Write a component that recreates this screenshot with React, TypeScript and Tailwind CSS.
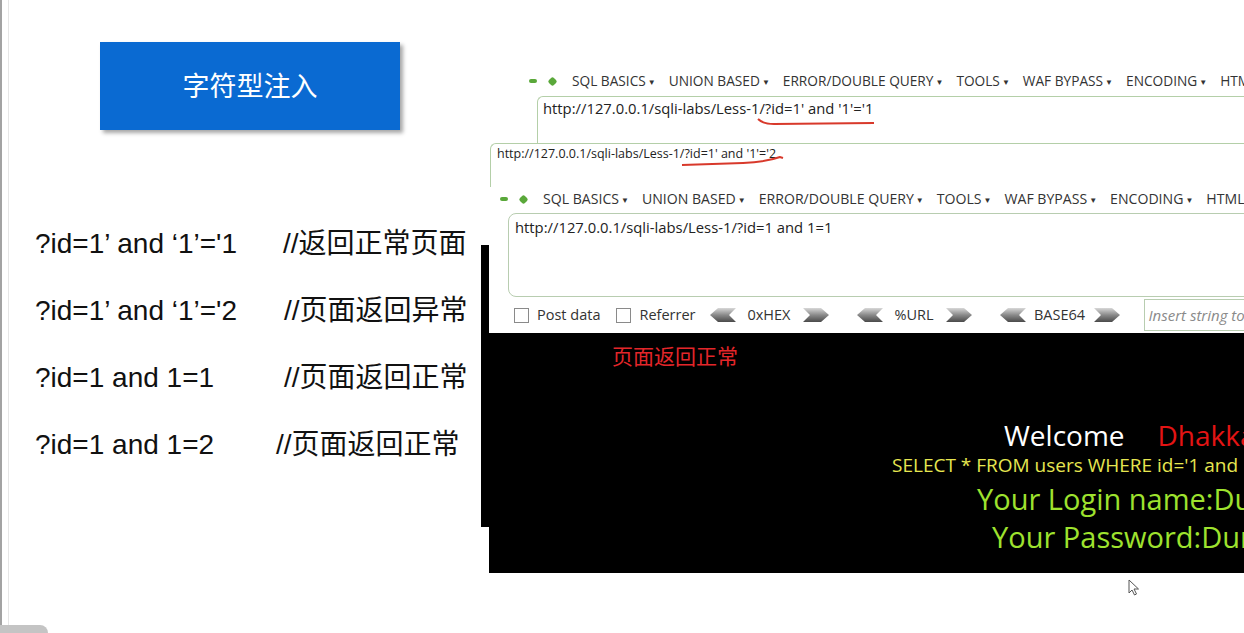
import React from "react";

const menuItems = [
  "SQL BASICS",
  "UNION BASED",
  "ERROR/DOUBLE QUERY",
  "TOOLS",
  "WAF BYPASS",
  "ENCODING",
  "HTML",
];

const rows = [
  { q: "?id=1’ and ‘1’='1", note: "//返回正常页面", w: "w-[248px]" },
  { q: "?id=1’ and ‘1’='2", note: "//页面返回异常", w: "w-[249px]" },
  { q: "?id=1 and 1=1", note: "//页面返回正常", w: "w-[249px]" },
  { q: "?id=1 and 1=2", note: "//页面返回正常", w: "w-[241px]" },
];

const HackMenu: React.FC<{ className?: string }> = ({ className = "" }) => (
  <div className={`flex items-center h-5 whitespace-nowrap text-[#333] ${className}`}>
    <span className="shrink-0 w-[8px] h-[4px] rounded-full bg-[#5aa83a]" />
    <span className="shrink-0 ml-[12px] w-[7px] h-[7px] rotate-45 rounded-[2px] bg-[#5aa83a]" />
    <div className="flex ml-[16px] gap-[13px]">
      {menuItems.map((m) => (
        <span key={m} className="flex items-center">
          {m}
          <span className="text-[8px] ml-[2px] mt-[1px]">▼</span>
        </span>
      ))}
    </div>
  </div>
);

const Arrow: React.FC<{ dir: "left" | "right" }> = ({ dir }) => (
  <svg width="26" height="14" viewBox="0 0 26 14" className="shrink-0">
    <defs>
      <linearGradient id={`g-${dir}`} x1="0" y1="0" x2="0" y2="1">
        <stop offset="0" stopColor="#d8d8d8" />
        <stop offset="0.5" stopColor="#8a8a8a" />
        <stop offset="1" stopColor="#4a4a4a" />
      </linearGradient>
    </defs>
    {dir === "left" ? (
      <polygon points="0,7 8,0 26,0 19,7 26,14 8,14" fill={`url(#g-${dir})`} />
    ) : (
      <polygon points="0,0 18,0 26,7 18,14 0,14 7,7" fill={`url(#g-${dir})`} />
    )}
  </svg>
);

const Check: React.FC<{ label: string }> = ({ label }) => (
  <span className="flex items-center gap-[8px]">
    <span className="w-[15px] h-[15px] border border-[#8a8a8a] bg-white" />
    <span>{label}</span>
  </span>
);

const Encode: React.FC<{ label: string; w: string }> = ({ label, w }) => (
  <span className="flex items-center">
    <Arrow dir="left" />
    <span className={`${w} text-center`}>{label}</span>
    <Arrow dir="right" />
  </span>
);

export default function App() {
  return (
    <div className="relative w-[1244px] h-[633px] overflow-hidden bg-white flex font-['Open_Sans',sans-serif]">
      <div className="w-[2px] bg-[#a3a3a3]" />
      <div className="w-[6px]" />
      <div className="w-px bg-[#e6e6e6]" />

      {/* slide text */}
      <div className="w-[472px] shrink-0 flex flex-col pt-[42px]">
        <div className="ml-[91px] w-[300px] h-[88px] bg-[#0a6ad2] shadow-[3px_3px_4px_rgba(0,0,0,0.35)] flex items-center justify-center pb-[2px] text-white text-[27px] font-['Noto_Sans_CJK_SC',sans-serif]">
          字符型注入
        </div>
        <div className="mt-[80px] pl-[26px] flex flex-col text-[#111] text-[28px] font-['Liberation_Sans','Noto_Sans_CJK_SC',sans-serif]">
          {rows.map((r) => (
            <div key={r.q + r.note} className="h-[67px] flex items-center whitespace-nowrap">
              <span className={r.w}>{r.q}</span>
              <span>{r.note}</span>
            </div>
          ))}
        </div>
      </div>

      {/* browser snippets */}
      <div className="flex-1 min-w-0 flex flex-col text-[14px]">
        <HackMenu className="mt-[71px] ml-[48px] text-[13.7px]" />
        <div className="relative mt-[5px] ml-[56px] h-[47px] border-t border-l border-[#b4cfa8] rounded-tl-[6px] pl-[5px] text-[14.8px] leading-[22px] text-[#222] whitespace-nowrap">
          http://127.0.0.1/sqli-labs/Less-1/?id=1' and '1'='1
          <svg className="absolute left-[219px] top-[21px]" width="120" height="10" viewBox="0 0 120 10">
            <path d="M1 1 Q6 6 17 6 L117 5" stroke="#d8392b" strokeWidth="2" fill="none" />
          </svg>
        </div>
        <div className="relative ml-[9px] h-[44px] border-t border-l border-[#b4cfa8] rounded-tl-[6px] pl-[6px] pt-[1px] text-[12.5px] text-[#222] whitespace-nowrap">
          http://127.0.0.1/sqli-labs/Less-1/?id=1' and '1'='2
          <svg className="absolute left-[190px] top-[11px]" width="104" height="12" viewBox="0 0 104 12">
            <path d="M1 10 Q30 9 62 8 Q85 7 99 2 L102 3" stroke="#d8392b" strokeWidth="2" fill="none" />
          </svg>
        </div>

        <div className="flex">
          <div className="w-[8px] shrink-0 mt-[58px] h-[282px] bg-black" />
          <div className="flex-1 min-w-0 flex flex-col pt-[2px]">
            <HackMenu className="ml-[11px] text-[14.1px]" />
            <div className="ml-[19px] mt-[4px] w-[760px] h-[84px] border border-[#b8cdb0] rounded-[8px] pl-[6px] pt-[2px] text-[14.8px] text-[#222] whitespace-nowrap">
              http://127.0.0.1/sqli-labs/Less-1/?id=1 and 1=1
            </div>
            <div className="h-[36px] flex items-center whitespace-nowrap text-[#333] text-[14.5px]">
              <div className="ml-[25px] flex items-center gap-[16px]">
                <Check label="Post data" />
                <Check label="Referrer" />
              </div>
              <div className="ml-[14px] flex items-center gap-[28px]">
                <Encode label="0xHEX" w="w-[67px]" />
                <Encode label="%URL" w="w-[63px]" />
                <Encode label="BASE64" w="w-[68px]" />
              </div>
              <div className="ml-[24px] h-[32px] flex-1 border border-[#b8cdb0] flex items-center pl-[4px] italic text-[#8a8a8a] text-[15px]">
                Insert string to
              </div>
            </div>
            <div className="h-[240px] bg-black flex flex-col whitespace-nowrap">
              <div className="mt-[7px] ml-[123px] text-[#e3262a] text-[21px] font-['Noto_Sans_CJK_SC',sans-serif]">
                页面返回正常
              </div>
              <div className="mt-[45px] ml-[515px] flex items-center h-[36px] text-[28px]">
                <span className="text-white">Welcome</span>
                <span className="ml-[33px] text-[#e31414]">Dhakkan</span>
              </div>
              <div className="ml-[403px] h-[26px] flex items-center text-[19px] text-[#e6e650]">
                SELECT * FROM users WHERE id='1 and 1=1' LIMIT 0,1
              </div>
              <div className="ml-[488px] mt-[1px] h-[38px] flex items-center text-[29px] text-[#9ee22e]">
                Your Login name:Dumb
              </div>
              <div className="ml-[503px] h-[38px] flex items-center text-[29px] text-[#9ee22e]">
                Your Password:Dumb
              </div>
            </div>
          </div>
        </div>
      </div>

      {/* mouse pointer */}
      <svg className="absolute left-[1128px] top-[579px]" width="12" height="17" viewBox="0 0 12 17">
        <path d="M1 1 L1 14 L4 11 L6.5 16 L8.5 15 L6 10 L10.5 10 Z" fill="#fff" stroke="#555" strokeWidth="1" />
      </svg>
      <div className="absolute left-0 bottom-0 w-[48px] h-[8px] rounded-tr-[8px] bg-[#c4c4c4]" />
    </div>
  );
}
